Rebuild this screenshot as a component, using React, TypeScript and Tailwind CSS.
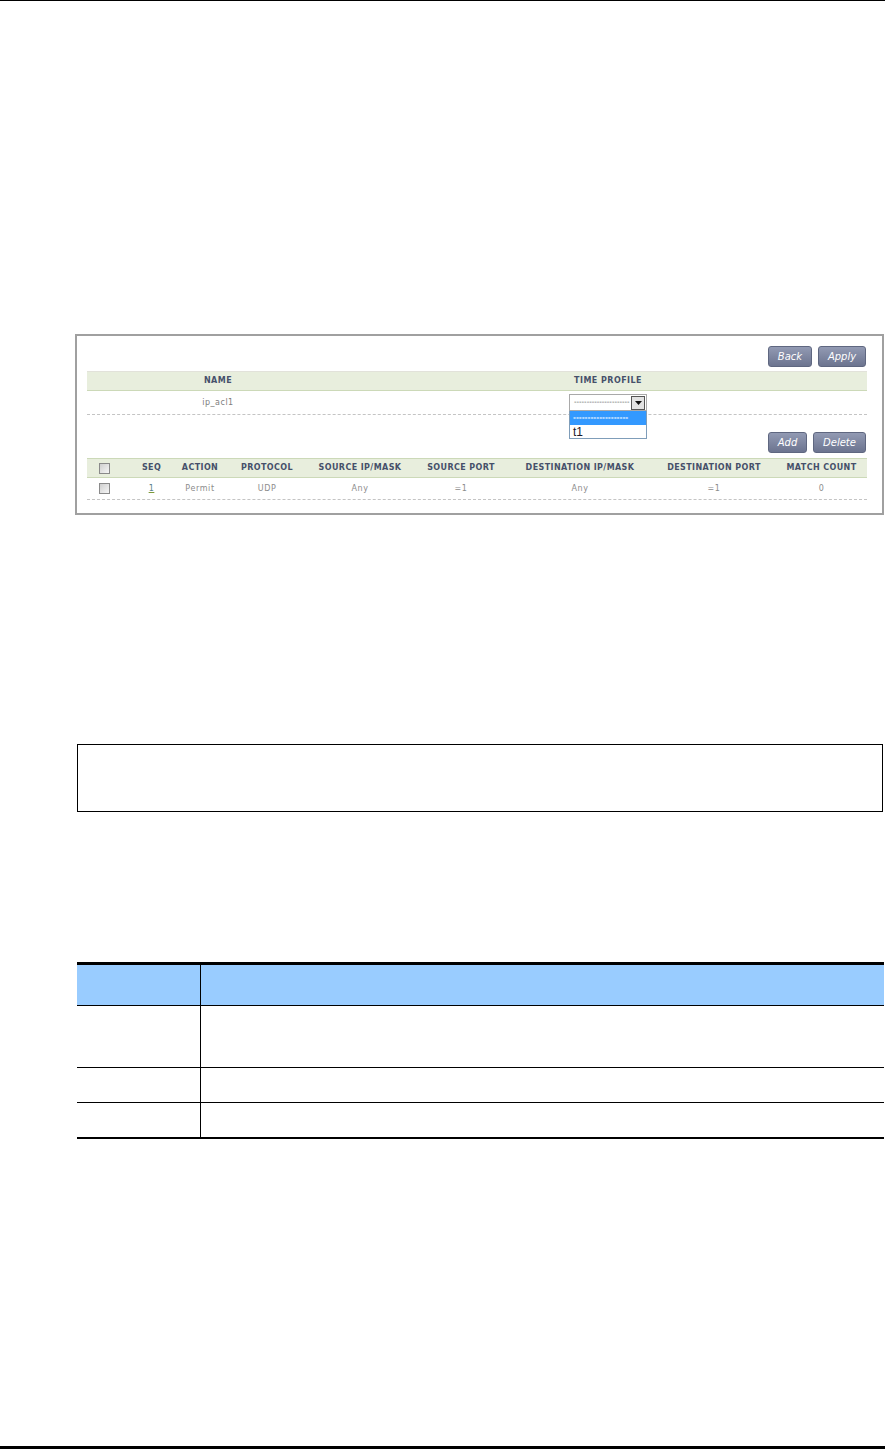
import React from 'react';

const ui = "font-['DejaVu_Sans',sans-serif]";

// column widths of the rule table, measured off the screenshot
const ruleCols = 'grid grid-cols-[35px_59px_38px_96px_90px_112px_126px_142px_73px] pr-[9px]';

const PanelButton: React.FC<{ label: string; width: string }> = ({ label, width }) => (
  <button
    className={`${width} h-[21px] rounded-[3px] border border-[#5f6780] bg-gradient-to-b from-[#929ab3] to-[#6c748f] text-[10px] italic text-white ${ui}`}
  >
    {label}
  </button>
);

const Check: React.FC = () => (
  <span className="block h-[11px] w-[11px] border border-[#8a8a8a] bg-gradient-to-br from-[#cfcfcf] to-[#f6f6f6]" />
);

const App: React.FC = () => {
  const headers = ['SEQ', 'ACTION', 'PROTOCOL', 'SOURCE IP/MASK', 'SOURCE PORT', 'DESTINATION IP/MASK', 'DESTINATION PORT', 'MATCH COUNT'];
  const values = ['Permit', 'UDP', 'Any', '=1', 'Any', '=1', '0'];

  return (
    <div className="flex h-[1449px] w-[885px] flex-col bg-white">
      <div className="h-px bg-black" />

      {/* Screenshot panel */}
      <div className="ml-[75px] mt-[333px] h-[181px] w-[809px] border-2 border-[#a0a0a0] px-[10px] pt-[10px]">
        <div className="flex w-[780px] justify-end gap-[6px] pr-px">
          <PanelButton label="Back" width="w-[44px]" />
          <PanelButton label="Apply" width="w-[48px]" />
        </div>

        <div className={`mt-[4px] grid h-[20px] w-[780px] grid-cols-[262px_518px] items-center border-b border-t border-b-[#ccd9b8] border-t-[#e2e2da] bg-[#e8eedd] text-center text-[8px] font-bold tracking-[0.45px] text-[#46506a] ${ui}`}>
          <span>NAME</span>
          <span>TIME PROFILE</span>
        </div>
        <div className={`relative grid h-[24px] w-[780px] grid-cols-[262px_518px] items-center border-b border-dashed border-[#c4c4c4] text-center text-[8px] tracking-[0.5px] text-[#7d7d7d] ${ui}`}>
          <span className="mt-px">ip_acl1</span>

          {/* Open select */}
          <div className="absolute left-[482px] top-[3px] z-10 w-[78px] bg-white tracking-normal">
            <div className="flex h-[17px] items-center justify-between border border-[#a9a9a9] pl-[4px] pr-px">
              <span className="text-[7px] leading-none text-[#444]">----------------------</span>
              <span className="flex h-[14px] w-[14px] items-center justify-center border border-[#555] bg-[#e2e2e2]">
                <svg width="7" height="4" viewBox="0 0 7 4">
                  <path d="M0 0h7L3.500 4z" fill="#111" />
                </svg>
              </span>
            </div>
            <div className="border border-t-0 border-[#7f9db9]">
              <div className="flex h-[14px] items-center bg-[#3399ff] pl-[3px] text-[7px] font-bold leading-none text-white">-------------------</div>
              <div className="flex h-[13px] items-center pl-[3px] font-['Liberation_Sans',sans-serif] text-[12px] leading-none text-[#1a1a2a]">t1</div>
            </div>
          </div>
        </div>

        <div className="mt-[17px] flex w-[780px] justify-end gap-[6px] pr-px">
          <PanelButton label="Add" width="w-[39px]" />
          <PanelButton label="Delete" width="w-[53px]" />
        </div>

        <div className={`${ruleCols} mt-[5px] h-[20px] w-[780px] items-center border-b border-t border-[#ccd9b8] bg-[#e8eedd] text-center text-[8px] font-bold tracking-[0.4px] text-[#46506a] ${ui}`}>
          <span className="flex justify-center"><Check /></span>
          {headers.map(h => <span key={h} className="whitespace-nowrap">{h}</span>)}
        </div>
        <div className={`${ruleCols} h-[22px] w-[780px] items-center border-b border-dashed border-[#c4c4c4] text-center text-[8px] tracking-[0.6px] text-[#8c8c8c] ${ui}`}>
          <span className="flex justify-center"><Check /></span>
          <span className="text-[#5d7f8a] underline decoration-[#7d9a3a]">1</span>
          {values.map((v, i) => <span key={i}>{v}</span>)}
        </div>
      </div>

      {/* Empty note box */}
      <div className="ml-[77px] mt-[229px] h-[68px] w-[806px] border border-black" />

      {/* Parameter table, text not legible in the source */}
      <div className="ml-[77px] mt-[150px] w-[807px] border-b-2 border-t-[3px] border-black">
        <div className="grid h-[41px] grid-cols-[124px_1fr] border-b border-black bg-[#99ccff]">
          <div className="border-r border-black" />
        </div>
        <div className="grid h-[62px] grid-cols-[124px_1fr] border-b border-black">
          <div className="border-r border-black" />
        </div>
        <div className="grid h-[35px] grid-cols-[124px_1fr] border-b border-black">
          <div className="border-r border-black" />
        </div>
        <div className="grid h-[34px] grid-cols-[124px_1fr]">
          <div className="border-r border-black" />
        </div>
      </div>

      <div className="mt-auto h-[3px] bg-black" />
    </div>
  );
};

export default App;
